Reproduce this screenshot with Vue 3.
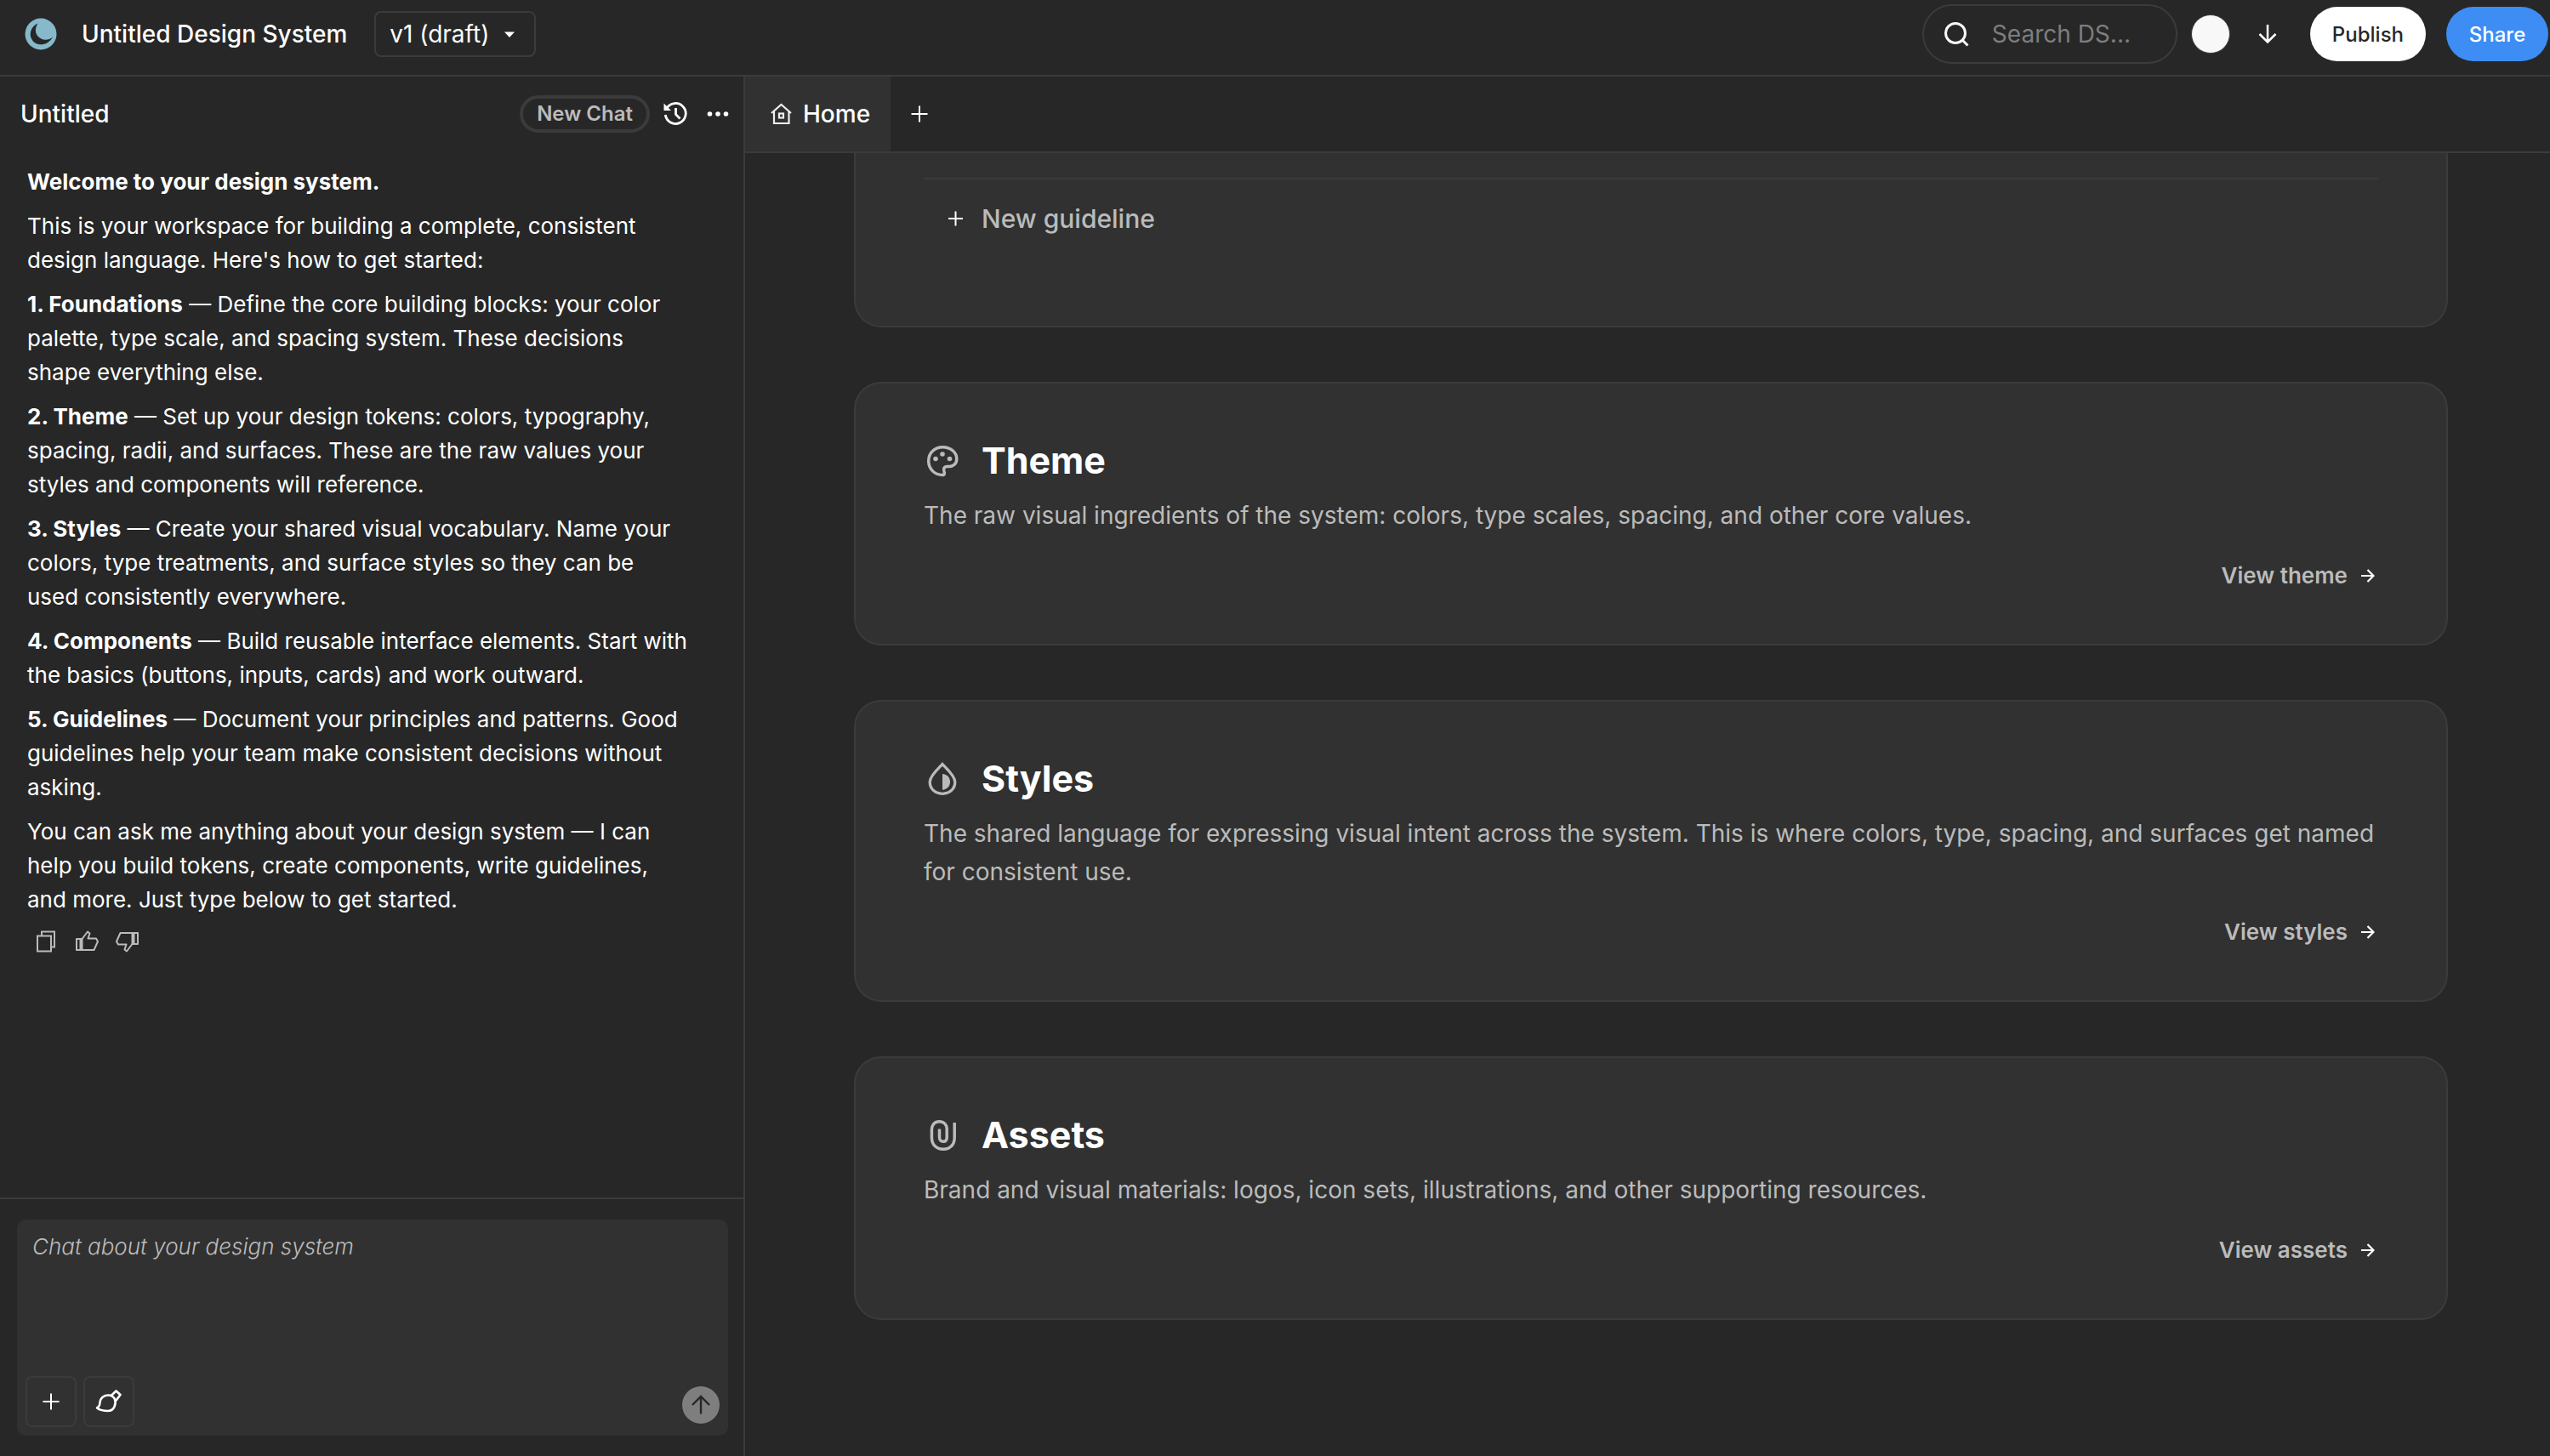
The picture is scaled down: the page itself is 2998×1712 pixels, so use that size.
<script setup>
import { ref } from 'vue'

const version = ref('v1')
const search = ref('')
const draft = ref('')

const versions = [
  { id: 'v1', label: 'v1 (draft)' },
]

const steps = [
  { title: '1. Foundations', text: 'Define the core building blocks: your color palette, type scale, and spacing system. These decisions shape everything else.' },
  { title: '2. Theme', text: 'Set up your design tokens: colors, typography, spacing, radii, and surfaces. These are the raw values your styles and components will reference.' },
  { title: '3. Styles', text: 'Create your shared visual vocabulary. Name your colors, type treatments, and surface styles so they can be used consistently everywhere.' },
  { title: '4. Components', text: 'Build reusable interface elements. Start with the basics (buttons, inputs, cards) and work outward.' },
  { title: '5. Guidelines', text: 'Document your principles and patterns. Good guidelines help your team make consistent decisions without asking.' },
]

const sections = [
  {
    id: 'theme',
    title: 'Theme',
    text: 'The raw visual ingredients of the system: colors, type scales, spacing, and other core values.',
  },
  {
    id: 'styles',
    title: 'Styles',
    text: 'The shared language for expressing visual intent across the system. This is where colors, type, spacing, and surfaces get named for consistent use.',
  },
  {
    id: 'assets',
    title: 'Assets',
    text: 'Brand and visual materials: logos, icon sets, illustrations, and other supporting resources.',
  },
]

function sendMessage() {
  draft.value = ''
}
</script>

<template>
  <div class="app">
    <header class="topbar">
      <a class="logo" href="#" aria-label="Home">
        <svg width="38" height="38" viewBox="0 0 38 38">
          <circle cx="19" cy="19" r="18.5" fill="#86b9ca" />
          <path d="M15.5 6.5C7.500 10 4.500 19 8.500 25.500C12.500 33 26.500 34.500 33 22.500C28 27 19.500 27 15 21C11.800 16.500 12.500 11 15.500 6.500Z" fill="#272727" />
        </svg>
      </a>
      <h1 class="title">Untitled Design System</h1>
      <div class="version">
        <select v-model="version" class="version-select" aria-label="Version">
          <option v-for="v in versions" :key="v.id" :value="v.id">{{ v.label }}</option>
        </select>
        <svg class="caret" width="12" height="8" viewBox="0 0 12 8" fill="#fff"><path d="M0 0.500h12L6 7z" /></svg>
      </div>

      <div class="actions">
        <label class="search">
          <svg width="32" height="32" viewBox="0 0 32 32" fill="none" stroke="#f8f8f8" stroke-width="3">
            <circle cx="15" cy="15" r="11.500" />
            <path d="M23 23l6.500 6.500" />
          </svg>
          <input v-model="search" type="text" placeholder="Search DS..." aria-label="Search design system">
        </label>
        <button class="avatar" aria-label="Account"></button>
        <button class="icon-btn download" aria-label="Download">
          <svg width="24" height="24" viewBox="0 0 24 24" fill="none" stroke="#fff" stroke-width="2.500">
            <path d="M12 1v20M2.500 12l9.500 9.500 9.500-9.500" />
          </svg>
        </button>
        <button class="pill publish">Publish</button>
        <button class="pill share">Share</button>
      </div>
    </header>

    <div class="body">
      <aside class="chat">
        <div class="chat-head">
          <h2 class="chat-title">Untitled</h2>
          <button class="new-chat">New Chat</button>
          <button class="icon-btn" aria-label="Chat history">
            <svg width="28" height="28" viewBox="0 0 28 28" fill="none" stroke="#fff" stroke-width="2.800">
              <path d="M3.800 7.500A12 12 0 1 1 2.300 15" />
              <path d="M14.500 7v7.500l5 5" />
              <path d="M0.500 1.500v8.500h8.500z" fill="#fff" stroke="none" />
            </svg>
          </button>
          <button class="icon-btn" aria-label="More">
            <svg width="26" height="28" viewBox="0 0 26 28" fill="#fff">
              <circle cx="3.500" cy="14" r="2.800" /><circle cx="13" cy="14" r="2.800" /><circle cx="22.500" cy="14" r="2.800" />
            </svg>
          </button>
        </div>

        <div class="messages">
          <p><strong>Welcome to your design system.</strong></p>
          <p>This is your workspace for building a complete, consistent design language. Here's how to get started:</p>
          <p v-for="step in steps" :key="step.title">
            <strong>{{ step.title }}</strong> — {{ step.text }}
          </p>
          <p>You can ask me anything about your design system — I can help you build tokens, create components, write guidelines, and more. Just type below to get started.</p>
          <div class="feedback">
            <button class="icon-btn" aria-label="Copy">
              <svg width="28" height="28" viewBox="0 0 28 28" fill="none" stroke="#bbb" stroke-width="2">
                <path d="M4 7.500h16v18H4z" /><path d="M9 7.500v-5h15v18h-4" />
              </svg>
            </button>
            <button class="icon-btn" aria-label="Good response">
              <svg width="28" height="28" viewBox="0 0 28 28" fill="none" stroke="#bbb" stroke-width="2" stroke-linejoin="round">
                <path d="M2 11h6.500v13H2zM6.500 11v13" />
                <path d="M8.500 11l6.500-8.500 2.500 2-2 6h9.500l2 3.500-4.500 10h-14" />
              </svg>
            </button>
            <button class="icon-btn" aria-label="Bad response">
              <svg width="28" height="28" viewBox="0 0 28 28" fill="none" stroke="#bbb" stroke-width="2" stroke-linejoin="round">
                <path d="M26 17h-6.500V4H26zM21.500 17V4" />
                <path d="M19.500 17l-6.500 8.500-2.500-2 2-6H3l-2-3.500L5.500 4h14" />
              </svg>
            </button>
          </div>
        </div>

        <div class="composer-wrap">
          <form class="composer" @submit.prevent="sendMessage">
            <textarea v-model="draft" placeholder="Chat about your design system" aria-label="Message"></textarea>
            <div class="composer-bar">
              <button type="button" class="tool" aria-label="Add">
                <svg width="20" height="20" viewBox="0 0 20 20" stroke="#fff" stroke-width="2"><path d="M10 0.500v19M0.500 10h19" /></svg>
              </button>
              <button type="button" class="tool" aria-label="Paint">
                <svg width="32" height="32" viewBox="0 0 32 32" fill="none" stroke="#fff" stroke-width="2.600" stroke-linejoin="round">
                  <path d="M2 23.500C5 22 5.300 20 5.500 17C6 11 11 8.500 15.500 8.500C19 8.500 21 10 22.800 12.800C25 18 22.500 27 15 27C10 27 6 26.500 2 23.500Z" />
                  <path d="M18.500 9.200L24.500 3.500L29.500 8L24 15.300" />
                </svg>
              </button>
              <button type="submit" class="send" aria-label="Send">
                <svg width="24" height="24" viewBox="0 0 24 24" fill="none" stroke="#272727" stroke-width="2.400"><path d="M12 22.500V2M2 12L12 2l10 10" /></svg>
              </button>
            </div>
          </form>
        </div>
      </aside>

      <main class="main">
        <nav class="tabs">
          <a class="tab" href="#">
            <svg width="26" height="26" viewBox="0 0 26 26" fill="none" stroke="#eee" stroke-width="2.200">
              <path d="M1 12L12.500 2 24 12" /><path d="M4 10v14h17.500V10" /><rect x="10" y="12.500" width="5" height="5" />
            </svg>
            Home
          </a>
          <button class="icon-btn add-tab" aria-label="New tab">
            <svg width="20" height="20" viewBox="0 0 20 20" stroke="#fff" stroke-width="2"><path d="M10 0.500v19M0.500 10h19" /></svg>
          </button>
        </nav>

        <div class="content">
          <section class="card guidelines">
            <button class="new-guideline">
              <svg width="18" height="18" viewBox="0 0 18 18" stroke="#fff" stroke-width="2"><path d="M9.500 0.500v17M1 9h17" /></svg>
              New guideline
            </button>
          </section>

          <section v-for="s in sections" :key="s.id" class="card">
            <h2 class="card-title">
              <svg v-if="s.id === 'theme'" width="44" height="44" viewBox="0 0 44 44" fill="none" stroke="#bbb" stroke-width="3.500">
                <path d="M22 38.500C12.500 38.500 5.700 31 5.700 22C5.700 12.500 13 5.700 22.500 5.700C31.500 5.700 38.800 12 38.800 19.500C38.800 25.500 34.500 28.500 30 28.500H27.500C24.500 28.500 23 30.500 23.800 33.500C24.800 36.500 24.500 38.500 22 38.500Z" />
                <g fill="#bbb" stroke="none"><circle cx="14" cy="19.500" r="2.800" /><circle cx="22" cy="14" r="2.800" /><circle cx="30.500" cy="19.500" r="2.800" /></g>
              </svg>
              <svg v-else-if="s.id === 'styles'" width="44" height="44" viewBox="0 0 44 44" fill="none" stroke="#bbb" stroke-width="3.300">
                <path d="M22 4.500C17.500 9.500 7.200 18 7.200 25.500C7.200 34 14 39.300 22 39.300S36.800 34 36.800 25.500C36.800 18 26.500 9.500 22 4.500Z" />
                <path d="M22 16C27.500 16.500 31 20 31 25.300C31 30.500 27.500 34.200 22 34.800Z" fill="#bbb" stroke="none" />
              </svg>
              <svg v-else width="44" height="44" viewBox="0 0 44 44" fill="none" stroke="#bbb" stroke-width="3.500">
                <path d="M36.200 7v17.500C36.200 33 31 38.300 23 38.300S9.400 33 9.400 24.500V15.500C9.400 9.500 13 5.700 18.300 5.700S27.200 9.500 27.200 15V24.500C27.200 27.500 25.500 29.300 23 29.300S18.500 27.500 18.500 24.500V14.500" />
              </svg>
              {{ s.title }}
            </h2>
            <p class="card-text">{{ s.text }}</p>
            <a class="card-link" :href="`#${s.id}`">
              View {{ s.id }}
              <svg width="16" height="18" viewBox="0 0 16 18" fill="none" stroke="#fff" stroke-width="2.200"><path d="M0 9h15M7.500 2l7 7-7 7" /></svg>
            </a>
          </section>
        </div>
      </main>
    </div>
  </div>
</template>

<style>
body {
  background: #272727;
}
</style>

<style scoped>
.app {
  --bg: #272727;
  --panel: #313131;
  --line: #3b3b3b;
  --muted: #bbb;
  display: flex;
  flex-direction: column;
  height: 100vh;
  overflow: hidden;
  background: var(--bg);
  color: #fff;
  font-family: Inter, "Liberation Sans", sans-serif;
  font-optical-sizing: none;
  font-size: 28px;
}

*,
*::before {
  box-sizing: border-box;
}

h1,
h2,
p {
  margin: 0;
  font-size: inherit;
}

a {
  color: inherit;
  text-decoration: none;
}

button,
input,
select,
textarea {
  margin: 0;
  padding: 0;
  border: none;
  outline: none;
  background: none;
  color: inherit;
  font: inherit;
  font-optical-sizing: none;
}

button {
  cursor: pointer;
}

svg {
  display: block;
  flex-shrink: 0;
}

.icon-btn {
  display: flex;
  align-items: center;
  justify-content: center;
}

/* top bar */
.topbar {
  display: flex;
  align-items: center;
  flex-shrink: 0;
  height: 90px;
  padding: 0 2px 8px 4px;
  border-bottom: 2px solid var(--line);
}

.logo {
  display: flex;
  align-items: center;
  justify-content: center;
  width: 88px;
  height: 80px;
  border-radius: 16px;
}

.title {
  padding-left: 4px;
  font-weight: 500;
}

.version {
  position: relative;
  margin-left: 32px;
}

.version-select {
  appearance: none;
  height: 54px;
  padding: 0 52px 0 16px;
  border: 2px solid var(--line);
  border-radius: 8px;
  cursor: pointer;
}

.version-select option {
  background: var(--panel);
}

.caret {
  position: absolute;
  right: 25px;
  top: 24px;
  pointer-events: none;
}

.actions {
  display: flex;
  align-items: center;
  margin-left: auto;
}

.search {
  display: flex;
  align-items: center;
  gap: 26px;
  width: 300px;
  height: 70px;
  padding: 0 24px 0 22px;
  border: 2px solid var(--line);
  border-radius: 35px;
}

.search input {
  flex: 1;
  min-width: 0;
}

.search input::placeholder {
  color: #7e7e7e;
}

.avatar {
  width: 46px;
  height: 46px;
  margin: 0 32px 0 16px;
  border: 1px solid var(--line);
  border-radius: 50%;
  background: #f8f8f8;
}

.download {
  margin-right: 38px;
}

.pill {
  min-width: 120px;
  height: 64px;
  padding: 0 26px;
  border-radius: 32px;
  font-size: 24px;
  font-weight: 500;
}

.publish {
  background: #fff;
  color: #272727;
}

.share {
  margin-left: 24px;
  background: #3d8df5;
}

/* chat */
.body {
  display: flex;
  flex: 1;
  min-height: 0;
}

.chat {
  display: flex;
  flex-direction: column;
  flex-shrink: 0;
  width: 876px;
  border-right: 2px solid var(--line);
}

.chat-head {
  display: flex;
  align-items: center;
  gap: 16px;
  height: 88px;
  padding: 0 17px 0 24px;
}

.chat-head .icon-btn + .icon-btn {
  margin-left: 7px;
}

.chat-title {
  flex: 1;
  font-weight: 500;
}

.new-chat {
  height: 44px;
  padding: 0 16px;
  border: 4px solid var(--line);
  border-radius: 22px;
  color: var(--muted);
  font-size: 24px;
  font-weight: 600;
  line-height: 36px;
}

.messages {
  display: flex;
  flex: 1;
  flex-direction: column;
  gap: 12px;
  min-height: 0;
  overflow: hidden;
  padding: 16px 64px 0 32px;
  font-size: 26px;
  line-height: 40px;
}

.messages strong {
  font-weight: 700;
}

.feedback {
  display: flex;
  gap: 20px;
  padding: 3px 8px;
}

.composer-wrap {
  padding: 24px 18px 24px 20px;
  border-top: 2px solid var(--line);
}

.composer {
  display: flex;
  flex-direction: column;
  height: 254px;
  padding: 10px;
  border-radius: 10px;
  background: var(--panel);
}

.composer textarea {
  flex: 1;
  padding: 2px 8px;
  resize: none;
  font-size: 26px;
  line-height: 40px;
}

.composer textarea::placeholder {
  color: var(--muted);
  font-style: italic;
  font-weight: 300;
}

.composer-bar {
  display: flex;
  align-items: center;
  gap: 8px;
}

.tool {
  display: flex;
  align-items: center;
  justify-content: center;
  width: 60px;
  height: 60px;
  border: 2px solid var(--line);
  border-radius: 8px;
}

.send {
  display: flex;
  align-items: center;
  justify-content: center;
  align-self: flex-end;
  width: 44px;
  height: 44px;
  margin: 0 0 4px auto;
  border-radius: 50%;
  background: #7e7e7e;
}

/* main column */
.main {
  display: flex;
  flex: 1;
  flex-direction: column;
  min-width: 0;
}

.tabs {
  display: flex;
  flex-shrink: 0;
  height: 90px;
  border-bottom: 2px solid var(--line);
}

.tab {
  display: flex;
  align-items: center;
  gap: 12px;
  padding: 0 24px 0 30px;
  background: var(--panel);
  font-weight: 500;
}

.add-tab {
  width: 68px;
}

.content {
  display: flex;
  flex: 1;
  flex-direction: column;
  gap: 64px;
  overflow: hidden;
  padding: 0 120px 0 128px;
}

.card {
  display: flex;
  flex-direction: column;
  flex-shrink: 0;
  padding: 64px 80px;
  border: 2px solid var(--line);
  border-radius: 32px;
  background: var(--panel);
}

.guidelines {
  padding: 29px 80px 80px;
  border-top: none;
  border-radius: 0 0 32px 32px;
}

.new-guideline {
  display: flex;
  align-items: center;
  gap: 22px;
  height: 94px;
  padding: 0 28px;
  border-top: 2px solid var(--line);
  color: var(--muted);
  font-size: 30px;
  font-weight: 500;
}

.card-title {
  display: flex;
  align-items: center;
  gap: 24px;
  font-size: 43px;
  font-weight: 700;
  line-height: 53px;
}

.card-text {
  margin-top: 16px;
  color: var(--muted);
  line-height: 45px;
}

.card-link {
  display: flex;
  align-items: center;
  align-self: flex-end;
  gap: 16px;
  margin-top: 32px;
  padding-right: 4px;
  color: var(--muted);
  font-size: 26px;
  font-weight: 600;
  line-height: 32px;
}
</style>
